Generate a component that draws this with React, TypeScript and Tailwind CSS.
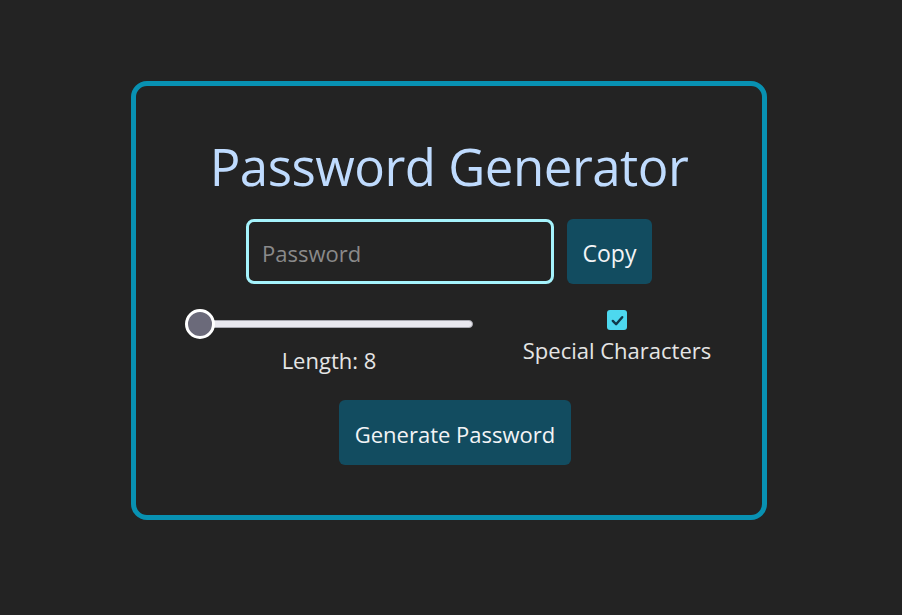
import { useState } from "react";

export default function App() {
  const [length] = useState(8);
  const [special, setSpecial] = useState(true);

  return (
    <div
      className="min-h-screen w-full bg-[#232323] pt-[81px] pl-[131px]"
      style={{ fontFamily: '"Open Sans", "Noto Sans", sans-serif' }}
    >
      {/* Card */}
      <div className="w-[636px] h-[439px] rounded-[16px] border-[5px] border-[#0891b2] flex flex-col items-center pt-[55px]">
        <h1 className="text-[51px] leading-none text-[#bfdbfe] tracking-[-0.5px]">Password Generator</h1>

        {/* Password row */}
        <div className="mt-[27px] flex items-center gap-[13px]">
          <input
            type="text"
            placeholder="Password"
            readOnly
            className="w-[308px] h-[65px] rounded-[8px] border-[3px] border-[#a5f3fc] bg-transparent px-[13px] pt-[2px] text-[22px] text-white placeholder:text-[#8a8a8a] outline-none"
          />
          <button className="w-[85px] h-[65px] rounded-[6px] bg-[#124c60] pt-[3px] text-[23px] text-[#f3f4f6]">Copy</button>
        </div>

        {/* Options row */}
        <div className="mt-[25px] flex items-start gap-[48px]">
          <div className="flex flex-col items-center">
            <div className="relative w-[288px] h-[30px] flex items-center">
              <div className="ml-[12px] h-[8px] w-[276px] rounded-full bg-[#e9e8ef] border border-[#a8a8b0]" />
              <div className="absolute left-0 top-0 w-[30px] h-[30px] rounded-full bg-[#6b6a7a] border-[3px] border-white" />
            </div>
            <span className="mt-[6px] text-[22px] leading-[30px] text-[#e5e5e5]">Length: {length}</span>
          </div>
          <div className="flex flex-col items-center w-[192px]">
            <button
              onClick={() => setSpecial(!special)}
              className="mt-[1px] w-[20px] h-[20px] rounded-[3px] bg-[#4dd8ef] flex items-center justify-center"
            >
              {special && (
                <svg viewBox="0 0 16 16" className="w-[15px] h-[15px]">
                  <path d="M3 8.5 L6.5 12 L13 4.5" fill="none" stroke="#10394a" strokeWidth="2.6" strokeLinecap="round" strokeLinejoin="round" />
                </svg>
              )}
            </button>
            <span className="mt-[5px] text-[22px] leading-[30px] whitespace-nowrap text-[#e5e5e5]">Special Characters</span>
          </div>
        </div>

        <button className="mt-[25px] ml-[12px] w-[232px] h-[65px] rounded-[6px] bg-[#124c60] pt-[3px] text-[22px] text-[#f3f4f6]">
          Generate Password
        </button>
      </div>
    </div>
  );
}
